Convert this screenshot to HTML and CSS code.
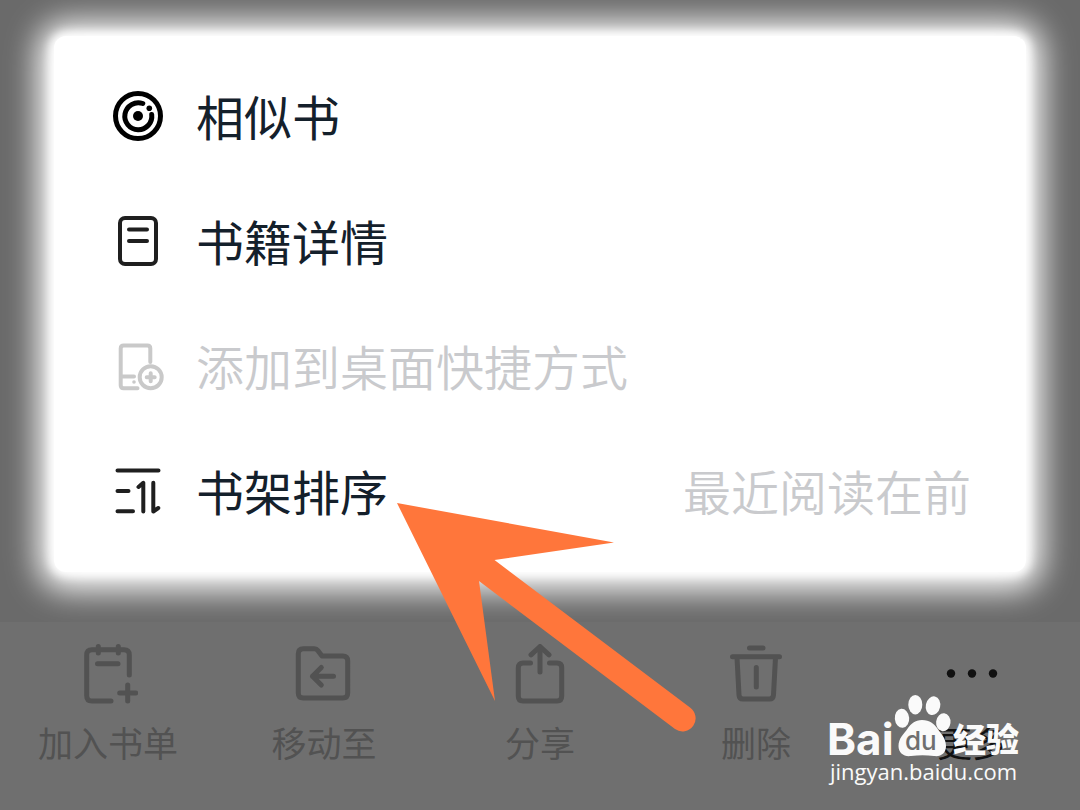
FILE: index.html
```html
<!DOCTYPE html>
<html lang="zh-CN">
<head>
<meta charset="utf-8">
<meta name="viewport" content="width=device-width, initial-scale=1">
<title>书架排序</title>
<link rel="stylesheet" href="styles.css">
</head>
<body>
<main class="stage">
  <div class="menu">
    <button class="row" type="button">
      <svg class="row-icon" viewBox="0 0 52 52" aria-hidden="true">
        <g class="ring">
          <circle cx="26" cy="25" r="22.500"/>
          <path d="M30.800 12.500A13.500 13.500 0 1 0 39.700 23.500"/>
        </g>
        <circle class="dot" cx="26" cy="25" r="5"/>
        <circle class="dot" cx="37.300" cy="17.300" r="2.800"/>
      </svg>
      <span class="row-label">相似书</span>
    </button>
    <button class="row" type="button">
      <svg class="row-icon soft" viewBox="0 0 52 52" aria-hidden="true">
        <rect x="8" y="2" width="36" height="46" rx="5"/>
        <path d="M17 13.500H35M17 25H35"/>
      </svg>
      <span class="row-label">书籍详情</span>
    </button>
    <button class="row" type="button" disabled>
      <svg class="row-icon" viewBox="0 0 52 52" aria-hidden="true">
        <path d="M38.300 21V7.500Q38.300 4.500 35.300 4.500H11.700Q8.700 4.500 8.700 7.500V44.200Q8.700 47.200 11.700 47.200H25.500M8.700 35.500H22"/>
        <circle class="dot" cx="22" cy="41" r="1.800"/>
        <circle cx="38.700" cy="36.200" r="11"/>
        <path d="M34.700 36.200H42.700M38.700 32.200V40.200"/>
      </svg>
      <span class="row-label">添加到桌面快捷方式</span>
    </button>
    <button class="row" type="button">
      <svg class="row-icon soft" viewBox="0 0 52 52" aria-hidden="true">
        <path d="M5.500 4.500H46.500M5.500 25H16.500M5.500 45.200H21M26.500 21L31.300 16.800V45.500M41.300 16.800V45.500L46.300 42"/>
      </svg>
      <span class="row-label">书架排序</span>
      <span class="row-value">最近阅读在前</span>
    </button>
  </div>
</main>
<nav class="toolbar">
  <button class="tool" type="button">
    <svg class="tool-icon" viewBox="0 0 60 60" aria-hidden="true">
      <path d="M33 57H14Q8.700 57 8.700 51.700V11Q8.700 5.700 14 5.700H46Q51.300 5.700 51.300 11V31M20.300 2.500V9M40.300 2.500V9M19.500 19.700H40M41.700 49H57.700M49.700 41V57"/>
    </svg>
    <span>加入书单</span>
  </button>
  <button class="tool" type="button">
    <svg class="tool-icon" viewBox="0 0 60 60" aria-hidden="true">
      <path d="M9.300 4.700H20.500Q22.500 4.700 24 6.700L28 12H48.700Q53.700 12 53.700 17V49Q53.700 54 48.700 54H9.300Q4.300 54 4.300 49V9.700Q4.300 4.700 9.300 4.700ZM39.500 32.300H18.500M27.300 23.500L18.500 32.300L27.300 41.100"/>
    </svg>
    <span>移动至</span>
  </button>
  <button class="tool" type="button">
    <svg class="tool-icon" viewBox="0 0 60 60" aria-hidden="true">
      <path d="M20.500 19H13Q8.300 19 8.300 23.700V52.300Q8.300 57 13 57H47Q51.700 57 51.700 52.300V23.700Q51.700 19 47 19H39.500M30 28V2.500M21 10.800L30 2.500L39 10.800"/>
    </svg>
    <span>分享</span>
  </button>
  <button class="tool" type="button">
    <svg class="tool-icon" viewBox="0 0 60 60" aria-hidden="true">
      <path d="M23.500 4H37M6.500 12.700H53.500M11 13.500L13 51Q13.300 55 17 55H43.500Q47.200 55 47.500 51L49.500 13.500M30.300 23.500V43"/>
    </svg>
    <span>删除</span>
  </button>
  <button class="tool tool-active" type="button">
    <svg class="tool-icon" viewBox="0 0 60 60" aria-hidden="true">
      <circle class="dot" cx="9" cy="29.500" r="4.200"/>
      <circle class="dot" cx="30" cy="29.500" r="4.200"/>
      <circle class="dot" cx="51" cy="29.500" r="4.200"/>
    </svg>
    <span>更多</span>
  </button>
</nav>
<svg class="pointer" viewBox="0 0 300 230" aria-hidden="true">
  <path d="M1 1L218 40.500L98.500 58L294 205.500A12.500 12.500 0 0 1 279 227L83 79L99 199Z"/>
</svg>
<svg class="watermark" viewBox="0 0 200 100" role="img" aria-label="Baidu经验 jingyan.baidu.com">
  <ellipse cx="77" cy="28.300" rx="7.200" ry="9.500" transform="rotate(-5 77 28.300)"/>
  <ellipse cx="90.300" cy="14.700" rx="7" ry="9.700"/>
  <ellipse cx="108" cy="15.700" rx="7.200" ry="9.400" transform="rotate(12 108 15.700)"/>
  <ellipse cx="118.300" cy="32.300" rx="7.200" ry="9" transform="rotate(6 118.300 32.300)"/>
  <path d="M97 30C105 30 109 34 112 38C116 44 121 48 121 56C121 63 116 67 109 66C101 65 94 65 86 66C79 67 73.500 63 73.500 56C73.500 48 79 44 83 38C86 34 90 30 97 30Z"/>
  <text class="mark-name" x="2" y="65">Bai</text>
  <text class="mark-du" x="80" y="60">du</text>
  <text class="mark-cn" x="128" y="62">经验</text>
  <text class="mark-url" x="5" y="90">jingyan.baidu.com</text>
</svg>
</body>
</html>
```
FILE: styles.css
```css
* {
  box-sizing: border-box;
}

body {
  position: relative;
  display: flex;
  flex-direction: column;
  min-height: 100vh;
  margin: 0;
  overflow-x: hidden;
  background: #6f6f6f;
  font-family: "Noto Sans CJK SC", "Noto Sans", sans-serif;
}

button {
  margin: 0;
  padding: 0;
  border: 0;
  background: none;
  color: inherit;
  font: inherit;
  text-align: left;
}

svg {
  fill: none;
  stroke: currentColor;
  stroke-linecap: round;
  stroke-linejoin: round;
}

.dot {
  fill: currentColor;
  stroke: none;
}

.stage {
  padding: 36px 54px 50px;
  background: #6a6a6a;
  overflow: hidden;
}

.menu {
  display: flex;
  flex-direction: column;
  padding: 18px 0;
  border-radius: 12px;
  background: #fff;
  box-shadow: 0 0 10px 4px #fff, 0 2px 32px 16px #fff;
}

.row {
  display: flex;
  align-items: center;
  gap: 32px;
  height: 125px;
  padding: 0 55px 0 58px;
  color: #14202b;
  font-size: 48px;
  line-height: 72px;
}

.row:disabled {
  color: #c9cacd;
}

.row:disabled .row-label {
  font-weight: 350;
}

.row-icon {
  flex: none;
  width: 52px;
  height: 52px;
  color: #000;
  stroke-width: 4;
}

.ring {
  stroke-width: 5;
}

.row-icon.soft {
  color: #1f1f1f;
}

.row:disabled .row-icon {
  color: #c9c9c9;
}

.row-label,
.row-value {
  padding-bottom: 4px;
}

.row-value {
  margin-left: auto;
  color: #c9cacd;
  font-weight: 350;
}

.toolbar {
  display: grid;
  flex: 1;
  grid-template-columns: repeat(5, 1fr);
  align-items: start;
  padding: 22px 0 40px;
  color: #525252;
}

.tool {
  display: flex;
  flex-direction: column;
  align-items: center;
  gap: 14px;
  font-size: 35px;
  line-height: 48px;
}

.tool-icon {
  width: 60px;
  height: 60px;
  stroke-width: 5;
}

.tool-active {
  color: #111;
}

.pointer {
  position: absolute;
  top: 502px;
  left: 396px;
  width: 300px;
  height: 230px;
  fill: #ff763b;
  stroke: none;
}

.watermark {
  position: absolute;
  right: 55px;
  bottom: 20px;
  width: 200px;
  height: 100px;
  fill: #fafafa;
  stroke: none;
}

.mark-name {
  font: 700 44px Inter, sans-serif;
}

.mark-du {
  fill: #6f6f6f;
  font: 500 26px Inter, sans-serif;
}

.mark-cn {
  font-size: 33px;
  font-weight: 900;
}

.mark-url {
  font: 500 22px "Open Sans", sans-serif;
}
```
